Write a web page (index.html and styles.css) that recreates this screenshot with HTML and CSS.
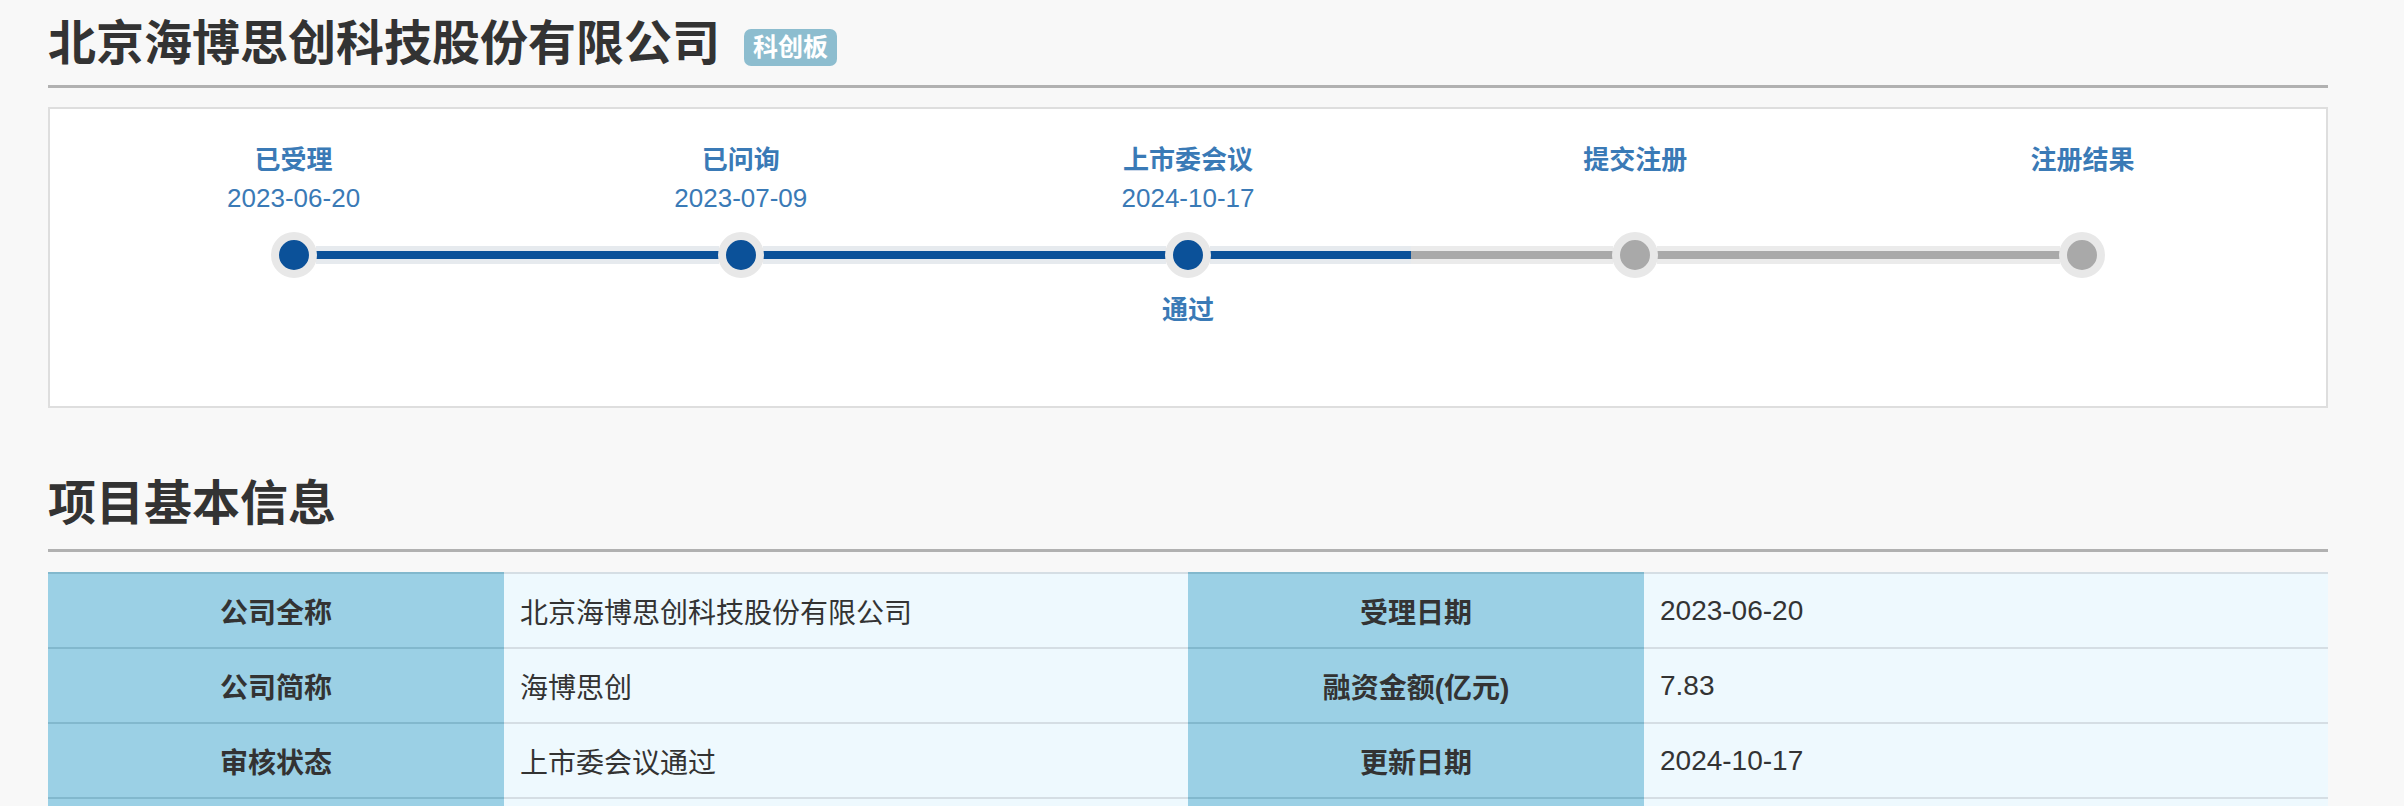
FILE: index.html
```html
<!DOCTYPE html>
<html lang="zh-CN">
<head>
    <meta charset="UTF-8">
    <title>北京海博思创科技股份有限公司</title>
    <link rel="stylesheet" href="styles.css">
</head>
<body>

    <div class="page">
        <div class="title-row">
            <h1>北京海博思创科技股份有限公司</h1>
            <span class="badge">科创板</span>
        </div>

        <div class="progress-box">
            <div class="step done">
                <div class="step-name">已受理</div>
                <div class="step-date">2023-06-20</div>
                <div class="node">
                    <span class="seg seg-none"></span>
                    <span class="dot"></span>
                    <span class="seg seg-blue"></span>
                </div>
            </div>
            <div class="step done">
                <div class="step-name">已问询</div>
                <div class="step-date">2023-07-09</div>
                <div class="node">
                    <span class="seg seg-blue"></span>
                    <span class="dot"></span>
                    <span class="seg seg-blue"></span>
                </div>
            </div>
            <div class="step done">
                <div class="step-name">上市委会议</div>
                <div class="step-date">2024-10-17</div>
                <div class="node">
                    <span class="seg seg-blue"></span>
                    <span class="dot"></span>
                    <span class="seg seg-blue"></span>
                </div>
                <div class="step-note">通过</div>
            </div>
            <div class="step">
                <div class="step-name">提交注册</div>
                <div class="step-date"></div>
                <div class="node">
                    <span class="seg seg-gray"></span>
                    <span class="dot"></span>
                    <span class="seg seg-gray"></span>
                </div>
            </div>
            <div class="step">
                <div class="step-name">注册结果</div>
                <div class="step-date"></div>
                <div class="node">
                    <span class="seg seg-gray"></span>
                    <span class="dot"></span>
                    <span class="seg seg-none"></span>
                </div>
            </div>
        </div>

        <div class="section-head">
            <h2>项目基本信息</h2>
        </div>

        <table class="info-table">
            <colgroup>
                <col class="col-label">
                <col class="col-value">
                <col class="col-label">
                <col class="col-value">
            </colgroup>
            <tr>
                <th>公司全称</th>
                <td>北京海博思创科技股份有限公司</td>
                <th>受理日期</th>
                <td>2023-06-20</td>
            </tr>
            <tr>
                <th>公司简称</th>
                <td>海博思创</td>
                <th>融资金额(亿元)</th>
                <td>7.83</td>
            </tr>
            <tr>
                <th>审核状态</th>
                <td>上市委会议通过</td>
                <th>更新日期</th>
                <td>2024-10-17</td>
            </tr>
            <tr>
                <th></th>
                <td></td>
                <th></th>
                <td></td>
            </tr>
        </table>
    </div>

</body>
</html>
```

FILE: styles.css
```css
body {
    margin: 0;
    background-color: #f8f8f8;
    font-family: "Liberation Sans", "Noto Sans CJK SC", sans-serif;
    color: #333;
}

.page {
    width: 2280px;
    padding: 0 48px;
}

.title-row {
    display: flex;
    align-items: center;
    padding: 20px 0 18px;
    border-bottom: 3px solid #b1b1b1;
}

.title-row h1 {
    margin: 0;
    font-size: 48px;
    line-height: 47px;
    font-weight: bold;
    color: #333;
}

.badge {
    margin: 8px 0 0 24px;
    padding: 0 9px;
    height: 37px;
    line-height: 37px;
    font-size: 25px;
    font-weight: bold;
    color: #fff;
    background-color: #8dbdcf;
    border-radius: 7px;
}

.progress-box {
    display: flex;
    box-sizing: border-box;
    height: 301px;
    margin-top: 19px;
    padding: 32px 20px 0;
    background-color: #fff;
    border: 2px solid #dedede;
}

.step {
    flex: 1;
    display: flex;
    flex-direction: column;
    align-items: center;
    color: #3a7ab6;
}

.step-name {
    font-size: 26px;
    line-height: 38px;
    font-weight: bold;
}

.step-date {
    font-size: 26px;
    line-height: 38px;
    height: 38px;
}

.node {
    display: flex;
    align-items: center;
    align-self: stretch;
    margin-top: 14px;
    height: 48px;
}

.seg {
    flex: 1;
    height: 8px;
    margin: 0 -1px;
    border-top: 5px solid transparent;
    border-bottom: 5px solid transparent;
}

.seg-blue {
    background-color: #0b5199;
    border-color: #e6eaee;
}

.seg-gray {
    background-color: #a9a9a9;
    border-color: #ebebeb;
}

.dot {
    position: relative;
    z-index: 1;
    width: 30px;
    height: 30px;
    border-radius: 50%;
    border: 8px solid #e8e8e8;
    background-color: #0b5199;
}

.step:not(.done) .dot {
    background-color: #a9a9a9;
}

.step-note {
    margin-top: 12px;
    font-size: 26px;
    line-height: 38px;
    font-weight: bold;
}

.section-head {
    margin-top: 72px;
    padding-bottom: 22px;
    border-bottom: 3px solid #b1b1b1;
}

.section-head h2 {
    margin: 0;
    font-size: 48px;
    line-height: 47px;
    font-weight: bold;
    color: #333;
}

.info-table {
    width: 100%;
    margin-top: 20px;
    border-collapse: collapse;
    table-layout: fixed;
    font-size: 28px;
}

.col-label {
    width: 20%;
}

.col-value {
    width: 30%;
}

.info-table tr {
    height: 75px;
}

.info-table th {
    background-color: #9bd0e5;
    border-top: 2px solid #82b8cd;
    font-weight: bold;
    color: #333;
    text-align: center;
}

.info-table td {
    padding: 0 16px;
    background-color: #eef9fe;
    border-top: 2px solid #d5dee4;
    color: #333;
}
```
